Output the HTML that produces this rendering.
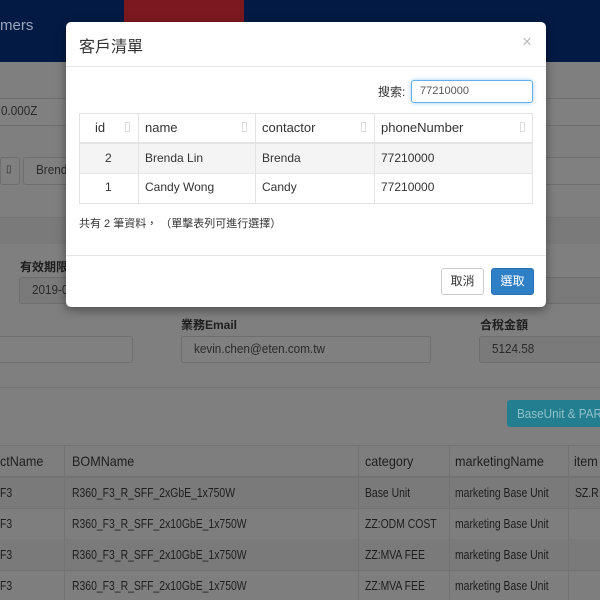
<!DOCTYPE html><html><head><meta charset="utf-8"><style>
*{box-sizing:border-box;margin:0;padding:0}
body{width:600px;height:600px;overflow:hidden;position:relative;background:#7f7f7f;font-family:"Liberation Sans","Noto Sans CJK TC",sans-serif;font-size:13px;color:#1e1e1e}
.a{position:absolute}
.inp{position:absolute;border:1px solid #6e6e6e;border-radius:3px;background:#808080;padding:0 12px;line-height:24px;color:#2a2a2a;font-size:13px;white-space:nowrap;overflow:hidden}
.t{position:absolute;font-size:13px;color:#1e1e1e;white-space:nowrap;transform:scaleX(.8);transform-origin:0 0}
.lb{position:absolute;font-size:12px;font-weight:bold;color:#1e1e1e;white-space:nowrap}
.row{position:absolute;left:0;width:600px;border-top:1px solid #737373}
.vl{position:absolute;width:1px;background:#737373}
.m{position:absolute;left:66px;top:22px;width:480px;height:285px;background:#fff;border-radius:5px;box-shadow:0 3px 10px rgba(0,0,0,.4)}
.mt{position:absolute;font-size:13px;color:#333;white-space:nowrap}
.cell{position:absolute;font-size:13px;color:#333;white-space:nowrap}
.sort{position:absolute;width:5px;height:10px;border:1px solid #ddd}
.n{display:inline-block;transform:scaleX(.9);transform-origin:0 0}
</style></head><body>
<div class="a" style="left:0;top:0;width:600px;height:62px;background:#031a44"></div>
<div class="a" style="left:124px;top:0;width:120px;height:22px;background:#7b1820"></div>
<div class="a" style="left:0;top:17px;color:#9aa6bb;font-size:15px">mers</div>
<div class="inp" style="left:-12px;top:98px;width:90px;height:28px"><span class="n">0.000Z</span></div>
<div class="inp" style="left:540px;top:98px;width:80px;height:28px"></div>
<div class="inp" style="left:0;top:157px;width:20px;height:28px;padding:0 5px;font-size:10px">▯</div>
<div class="inp" style="left:23px;top:157px;width:100px;height:28px"><span class="n">Brenda</span></div>
<div class="inp" style="left:540px;top:157px;width:80px;height:28px"></div>
<div class="a" style="left:0;top:217px;width:600px;height:27px;background:#7a7a7a;border-top:1px solid #747474"></div>
<div class="lb" style="left:20px;top:258px">有效期限</div>
<div class="inp" style="left:19px;top:277px;width:80px;height:27px;background:#7a7a7a"><span class="n">2019-0</span></div>
<div class="inp" style="left:540px;top:277px;width:80px;height:27px;background:#7a7a7a"></div>
<div class="inp" style="left:-10px;top:336px;width:143px;height:27px"></div>
<div class="lb" style="left:181px;top:316px">業務Email</div>
<div class="inp" style="left:181px;top:336px;width:250px;height:27px"><span class="n">kevin.chen@eten.com.tw</span></div>
<div class="lb" style="left:480px;top:316px">合稅金額</div>
<div class="inp" style="left:479px;top:336px;width:130px;height:27px;background:#7a7a7a"><span class="n">5124.58</span></div>
<div class="row" style="top:387px"></div>
<div class="a" style="left:507px;top:400px;width:100px;height:27px;background:#237f90;border-radius:3px;color:#8fc0ca;line-height:27px;padding-left:10px;font-size:13px;white-space:nowrap;overflow:hidden"><span class="n">BaseUnit &amp; PAR</span></div>
<div class="a" style="left:0;top:445px;width:600px;height:155px;background:#7e7e7e"></div>
<div class="row" style="top:445px"></div>
<div class="row" style="top:476px;border-top:2px solid #737373"></div>
<div class="row" style="top:508px"></div><div class="row" style="top:539px"></div><div class="row" style="top:570px"></div>
<div class="a" style="left:0;top:478px;width:600px;height:30px;background:#7a7a7a"></div>
<div class="a" style="left:0;top:539px;width:600px;height:31px;background:#7a7a7a"></div>
<div class="vl" style="left:64px;top:445px;height:155px"></div>
<div class="vl" style="left:358px;top:445px;height:155px"></div>
<div class="vl" style="left:449px;top:445px;height:155px"></div>
<div class="vl" style="left:568px;top:445px;height:155px"></div>
<div class="t" style="left:0;top:453px;font-size:14px;transform:scaleX(.9)">ctName</div>
<div class="t" style="left:72px;top:453px;font-size:14px;transform:scaleX(.9)">BOMName</div>
<div class="t" style="left:365px;top:453px;font-size:14px;transform:scaleX(.9)">category</div>
<div class="t" style="left:455px;top:453px;font-size:14px;transform:scaleX(.9)">marketingName</div>
<div class="t" style="left:574px;top:453px;font-size:14px;transform:scaleX(.9)">item</div>
<div class="t" style="left:0;top:485px">F3</div><div class="t" style="left:72px;top:485px">R360_F3_R_SFF_2xGbE_1x750W</div><div class="t" style="left:365px;top:485px">Base Unit</div><div class="t" style="left:455px;top:485px">marketing Base Unit</div><div class="t" style="left:575px;top:485px">SZ.R</div>
<div class="t" style="left:0;top:516px">F3</div><div class="t" style="left:72px;top:516px">R360_F3_R_SFF_2x10GbE_1x750W</div><div class="t" style="left:365px;top:516px">ZZ:ODM COST</div><div class="t" style="left:455px;top:516px">marketing Base Unit</div>
<div class="t" style="left:0;top:547px">F3</div><div class="t" style="left:72px;top:547px">R360_F3_R_SFF_2x10GbE_1x750W</div><div class="t" style="left:365px;top:547px">ZZ:MVA FEE</div><div class="t" style="left:455px;top:547px">marketing Base Unit</div>
<div class="t" style="left:0;top:578px">F3</div><div class="t" style="left:72px;top:578px">R360_F3_R_SFF_2x10GbE_1x750W</div><div class="t" style="left:365px;top:578px">ZZ:MVA FEE</div><div class="t" style="left:455px;top:578px">marketing Base Unit</div>

<div class="m">
<div class="mt" style="left:13px;top:11px;font-size:16px">客戶清單</div>
<div class="mt" style="left:456px;top:10px;font-size:17px;color:#bbb">×</div>
<div class="a" style="left:0;top:44px;width:480px;border-top:1px solid #e5e5e5"></div>
<div class="mt" style="left:312px;top:61px;font-size:12px">搜索:</div>
<div class="a" style="left:345px;top:58px;width:122px;height:23px;border:1px solid #66afe9;border-radius:3px;box-shadow:0 0 5px rgba(102,175,233,.6);font-size:11px;line-height:21px;padding-left:8px;color:#555">77210000</div>
<div class="a" style="left:13px;top:91px;width:454px;height:91px;border:1px solid #e3e3e3"></div>
<div class="a" style="left:14px;top:120px;width:452px;height:2px;background:#e3e3e3"></div>
<div class="a" style="left:14px;top:122px;width:452px;height:29px;background:#f4f4f4"></div>
<div class="a" style="left:14px;top:151px;width:452px;border-top:1px solid #e6e6e6"></div>
<div class="a" style="left:72px;top:91px;width:1px;height:91px;background:#e3e3e3"></div>
<div class="a" style="left:189px;top:91px;width:1px;height:91px;background:#e3e3e3"></div>
<div class="a" style="left:308px;top:91px;width:1px;height:91px;background:#e3e3e3"></div>
<div class="cell" style="left:29px;top:98px">id</div><div class="sort" style="left:59px;top:100px"></div>
<div class="cell" style="left:79px;top:98px">name</div><div class="sort" style="left:176px;top:100px"></div>
<div class="cell" style="left:196px;top:98px">contactor</div><div class="sort" style="left:295px;top:100px"></div>
<div class="cell" style="left:315px;top:98px">phoneNumber</div><div class="sort" style="left:454px;top:100px"></div>
<div class="cell" style="left:39px;top:129px;font-size:12px">2</div><div class="cell" style="left:79px;top:129px;font-size:12px">Brenda Lin</div><div class="cell" style="left:196px;top:129px;font-size:12px">Brenda</div><div class="cell" style="left:315px;top:129px;font-size:12px">77210000</div>
<div class="cell" style="left:39px;top:158px;font-size:12px">1</div><div class="cell" style="left:79px;top:158px;font-size:12px">Candy Wong</div><div class="cell" style="left:196px;top:158px;font-size:12px">Candy</div><div class="cell" style="left:315px;top:158px;font-size:12px">77210000</div>
<div class="mt" style="left:13px;top:193px;font-size:11px">共有 2 筆資料，&nbsp;（單擊表列可進行選擇）</div>
<div class="a" style="left:0;top:233px;width:480px;border-top:1px solid #e5e5e5"></div>
<div class="a" style="left:375px;top:246px;width:43px;height:27px;border:1px solid #ccc;border-radius:3px;font-size:12px;line-height:25px;text-align:center;color:#333">取消</div>
<div class="a" style="left:425px;top:246px;width:43px;height:27px;background:#2e7fc6;border:1px solid #2a70b0;border-radius:3px;font-size:12px;line-height:25px;text-align:center;color:#fff">選取</div>
</div>
</body></html>
